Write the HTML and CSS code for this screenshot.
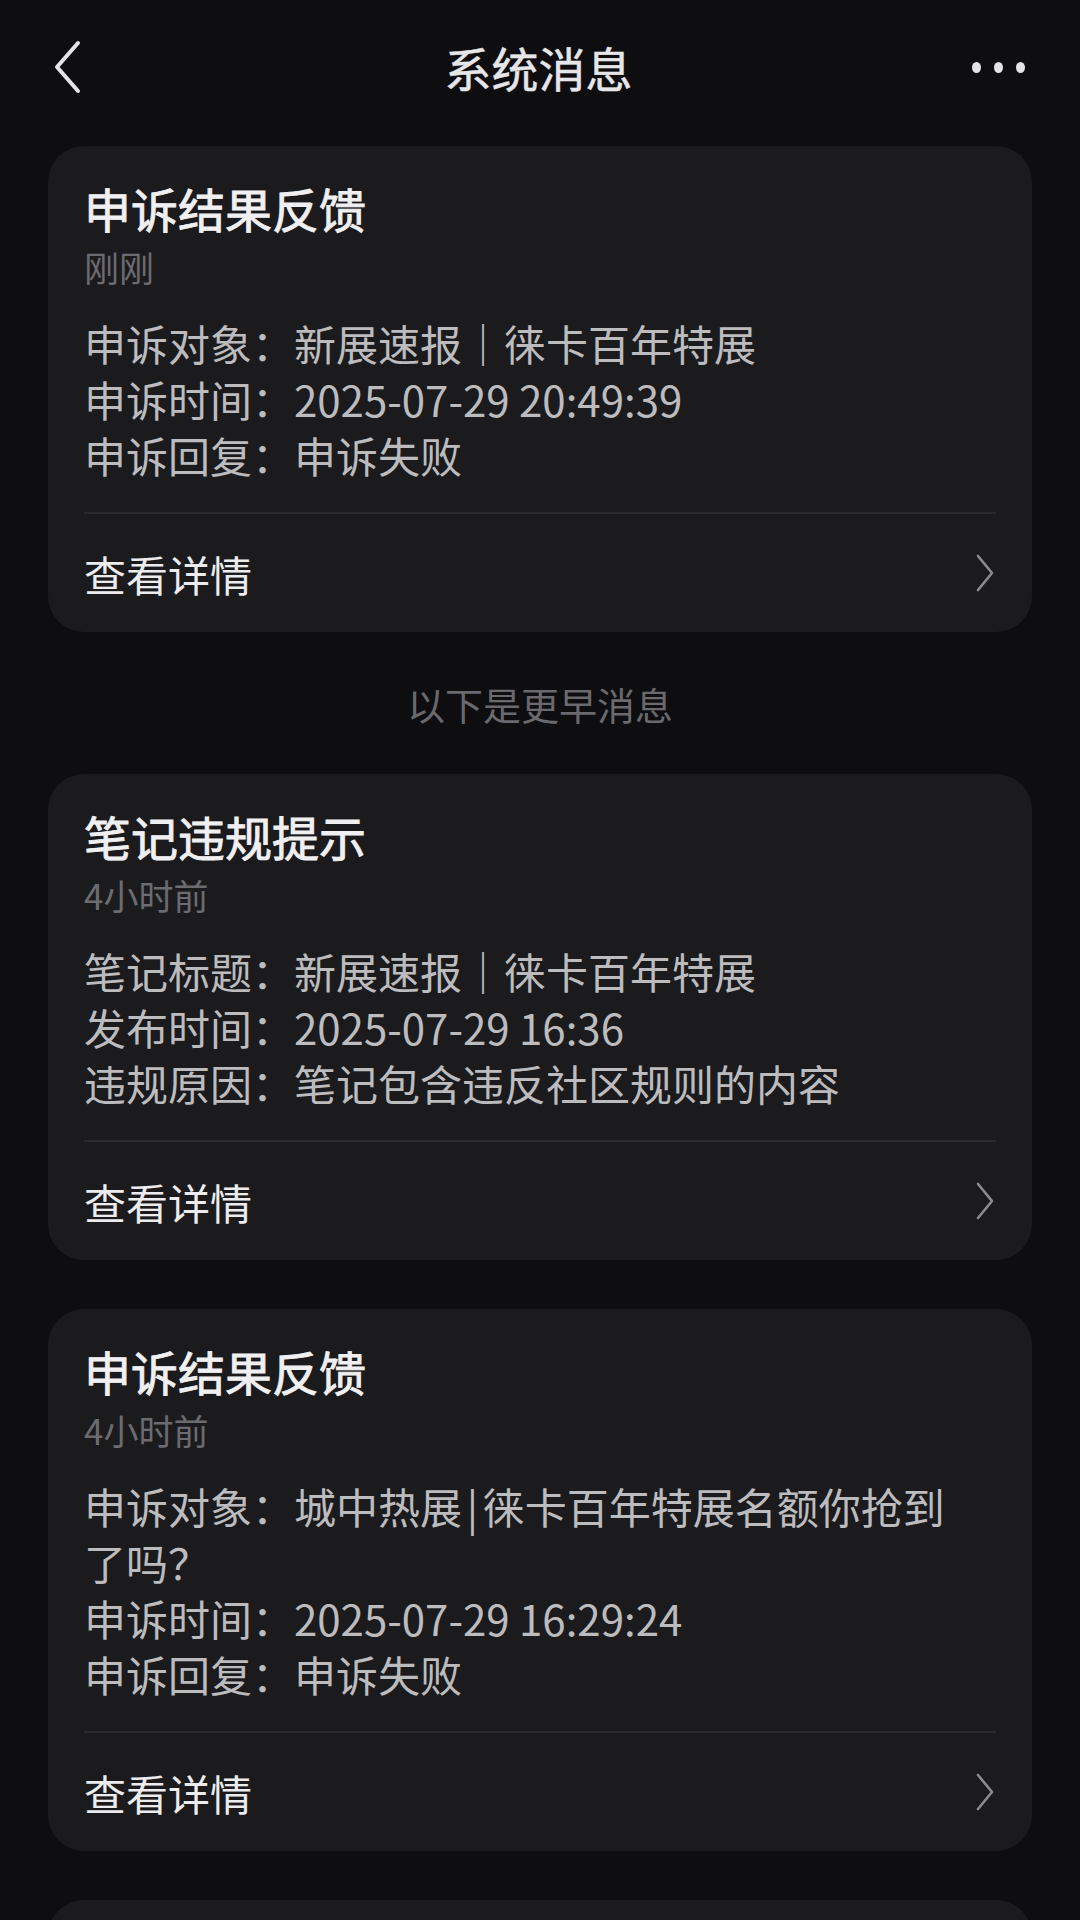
FILE: index.html
```html
<!DOCTYPE html>
<html lang="zh-CN">
<head>
<meta charset="utf-8">
<title>系统消息</title>
<link rel="stylesheet" href="styles.css">
</head>
<body>
<div class="page">
  <header class="topbar">
    <span class="back">
      <svg width="30" height="54" viewBox="0 0 30 54"><path d="M26 3 L5 27 L26 51" fill="none" stroke="#e4e4e6" stroke-width="4" stroke-linecap="round" stroke-linejoin="round"/></svg>
    </span>
    <h1 class="topbar-title">系统消息</h1>
    <span class="more"><i></i><i></i><i></i></span>
  </header>

  <main class="list">
    <section class="card">
      <h2 class="card-title">申诉结果反馈</h2>
      <div class="card-time">刚刚</div>
      <div class="card-info">
        <p>申诉对象：新展速报｜徕卡百年特展</p>
        <p>申诉时间：2025-07-29 20:49:39</p>
        <p>申诉回复：申诉失败</p>
      </div>
      <div class="card-footer">
        <span>查看详情</span>
        <svg class="arrow" width="20" height="38" viewBox="0 0 20 38"><path d="M3 2 L17 19 L3 36" fill="none" stroke="#8c8c90" stroke-width="2.6" stroke-linecap="round" stroke-linejoin="round"/></svg>
      </div>
    </section>

    <div class="earlier">以下是更早消息</div>

    <section class="card">
      <h2 class="card-title">笔记违规提示</h2>
      <div class="card-time">4小时前</div>
      <div class="card-info">
        <p>笔记标题：新展速报｜徕卡百年特展</p>
        <p>发布时间：2025-07-29 16:36</p>
        <p>违规原因：笔记包含违反社区规则的内容</p>
      </div>
      <div class="card-footer">
        <span>查看详情</span>
        <svg class="arrow" width="20" height="38" viewBox="0 0 20 38"><path d="M3 2 L17 19 L3 36" fill="none" stroke="#8c8c90" stroke-width="2.6" stroke-linecap="round" stroke-linejoin="round"/></svg>
      </div>
    </section>

    <section class="card">
      <h2 class="card-title">申诉结果反馈</h2>
      <div class="card-time">4小时前</div>
      <div class="card-info">
        <p>申诉对象：城中热展&#8239;|&#8239;徕卡百年特展名额你抢到了吗？</p>
        <p>申诉时间：2025-07-29 16:29:24</p>
        <p>申诉回复：申诉失败</p>
      </div>
      <div class="card-footer">
        <span>查看详情</span>
        <svg class="arrow" width="20" height="38" viewBox="0 0 20 38"><path d="M3 2 L17 19 L3 36" fill="none" stroke="#8c8c90" stroke-width="2.6" stroke-linecap="round" stroke-linejoin="round"/></svg>
      </div>
    </section>

    <section class="card card-peek"></section>
  </main>
</div>
</body>
</html>
```

FILE: styles.css
```css
* { box-sizing: border-box; }

html, body {
  margin: 0;
  padding: 0;
  background: #0e0e10;
}

body {
  font-family: "Noto Sans CJK SC", "Noto Sans", sans-serif;
  color: #e8e8ea;
  width: 1080px;
  height: 1920px;
  overflow: hidden;
}

.page {
  display: flex;
  flex-direction: column;
}

.topbar {
  height: 134px;
  display: flex;
  align-items: center;
  justify-content: space-between;
  padding: 0 55px 0 52px;
}

.back {
  display: flex;
  width: 120px;
}

.topbar-title {
  margin: 0;
  font-size: 47px;
  font-weight: 400;
  -webkit-text-stroke: 0.5px #e6e6e8;
  color: #e6e6e8;
  line-height: 60px;
}

.more {
  width: 120px;
  display: flex;
  justify-content: flex-end;
  gap: 13px;
}

.more i {
  display: block;
  width: 9px;
  height: 11px;
  border-radius: 50%;
  background: #e4e4e6;
}

.list {
  padding: 12px 48px 0;
  display: flex;
  flex-direction: column;
}

.card {
  background: #1b1b1e;
  border-radius: 36px;
  padding: 32px 36px 0;
  display: flex;
  flex-direction: column;
}

.card + .card {
  margin-top: 49px;
}

.card-title {
  margin: 0;
  font-size: 47px;
  font-weight: 400;
  -webkit-text-stroke: 0.9px #f0f0f2;
  line-height: 60px;
  color: #f0f0f2;
}

.card-time {
  font-size: 35px;
  line-height: 58px;
  color: #6c6c70;
}

.card-info {
  margin-top: 19px;
  padding-right: 40px;
}

.card-info p {
  margin: 0;
  font-size: 42px;
  line-height: 56px;
  color: #bcbcbf;
}

.card-footer {
  margin-top: 29px;
  border-top: 2px solid #2b2b2f;
  height: 120px;
  display: flex;
  align-items: center;
  justify-content: space-between;
  font-size: 42px;
  color: #ececee;
}

.arrow {
  margin-right: 1px;
}

.earlier {
  height: 142px;
  display: flex;
  align-items: center;
  justify-content: center;
  font-size: 38px;
  color: #6a6a6e;
}

.card-peek {
  height: 120px;
}
```
